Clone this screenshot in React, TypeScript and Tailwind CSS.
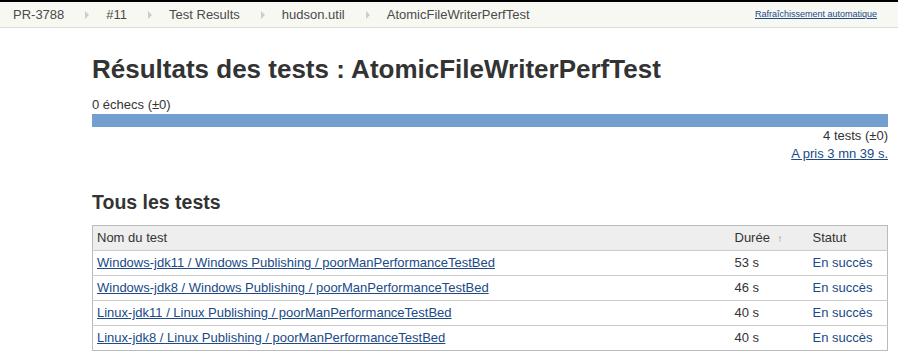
import React from "react";

const crumbs = ["PR-3788", "#11", "Test Results", "hudson.util", "AtomicFileWriterPerfTest"];
const rows = [
  ["Windows-jdk11 / Windows Publishing / poorManPerformanceTestBed", "53 s"],
  ["Windows-jdk8 / Windows Publishing / poorManPerformanceTestBed", "46 s"],
  ["Linux-jdk11 / Linux Publishing / poorManPerformanceTestBed", "40 s"],
  ["Linux-jdk8 / Linux Publishing / poorManPerformanceTestBed", "40 s"],
];

function Arrow() {
  return (
    <svg width="5" height="8" viewBox="0 0 5 8" className="ml-[21px] mr-[16px]">
      <path d="M0 0 L4 4 L0 8 Z" fill="#cccccc" />
    </svg>
  );
}

export default function App() {
  return (
    <div className="w-[898px] h-[360px] bg-white overflow-hidden text-[#333]" style={{ fontFamily: '"Liberation Sans", Arial, sans-serif' }}>
      <div className="h-[2px] bg-black" />
      <div className="h-[26px] bg-[#f8f8f3] border-b border-[#dcdcd6] flex items-center pl-[13px] pr-[21px] text-[13px] text-[#4a4a4a]">
        {crumbs.map((c, i) => (
          <React.Fragment key={c}>
            {i > 0 && <Arrow />}
            <span>{c}</span>
          </React.Fragment>
        ))}
        <a className="ml-auto text-[9px] text-[#204a87] underline">Rafraîchissement automatique</a>
      </div>
      <div className="pl-[92px] pr-[10px]">
        <h1 className="text-[26px] font-bold leading-[30px] mt-[26px] text-[#333]">Résultats des tests : AtomicFileWriterPerfTest</h1>
        <div className="text-[13px] mt-[13px] leading-[16px]">0 échecs (±0)</div>
        <div className="h-[13px] bg-[#729fcf] mt-[1px]" />
        <div className="text-[13px] text-right leading-[16px] mt-[1px]">4 tests (±0)</div>
        <div className="text-[13px] text-right leading-[16px] mt-[2px]">
          <a className="text-[#204a87] underline">A pris 3 mn 39 s.</a>
        </div>
        <h2 className="text-[19.5px] font-bold leading-[24px] mt-[28px] text-[#333]">Tous les tests</h2>
        <table className="w-full mt-[11px] border border-[#bbb] border-collapse text-[13px]">
          <thead>
            <tr className="bg-[#eeeeee] h-[25px]">
              <th className="text-left font-normal pl-[4px]">Nom du test</th>
              <th className="text-left font-normal w-[78px]">Durée <span className="text-[10px] text-[#888] ml-[4px]">↑</span></th>
              <th className="text-left font-normal w-[75px]">Statut</th>
            </tr>
          </thead>
          <tbody>
            {rows.map(([n, d]) => (
              <tr key={n} className="h-[25px] border-t border-[#cccccc]">
                <td className="pl-[4px]"><a className="text-[#204a87] underline">{n}</a></td>
                <td>{d}</td>
                <td className="text-[#204a87]">En succès</td>
              </tr>
            ))}
          </tbody>
        </table>
      </div>
    </div>
  );
}
